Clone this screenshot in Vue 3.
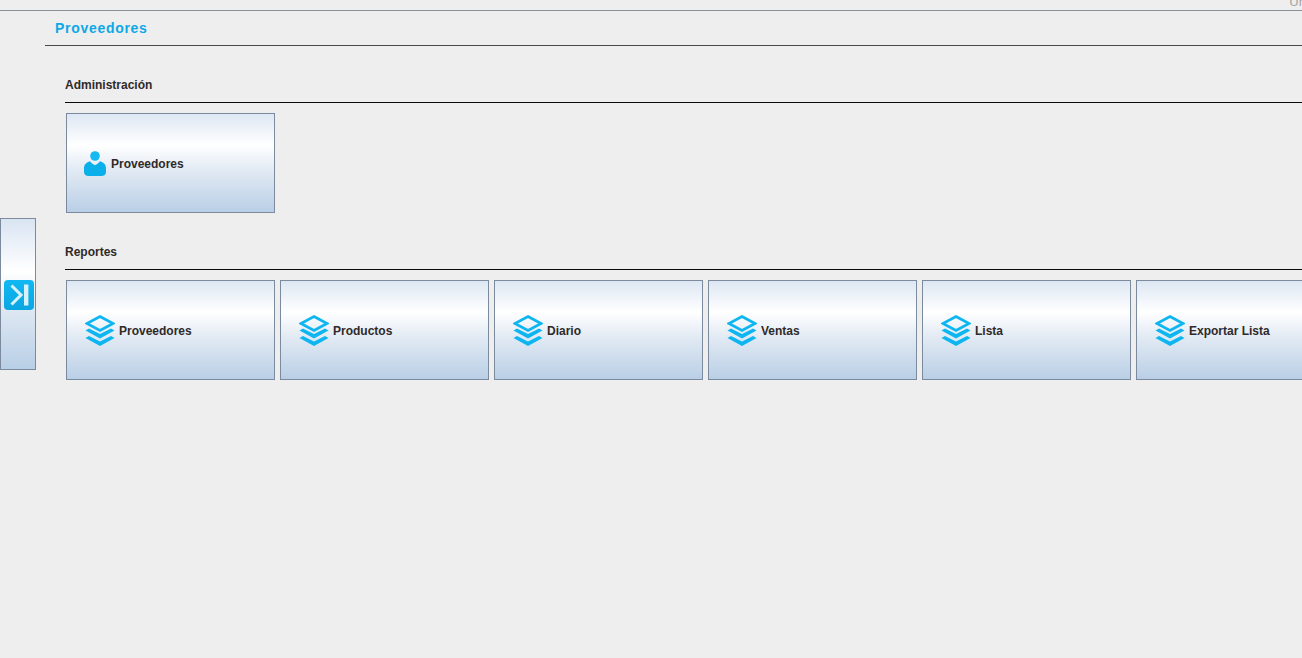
<script setup>
const reports = ['Proveedores', 'Productos', 'Diario', 'Ventas', 'Lista', 'Exportar Lista']
</script>

<template>
  <div class="page">
    <div class="topbar">
      <span class="user">Ur</span>
    </div>
    <div class="body">
      <aside class="side">
        <button class="toggle" type="button" aria-label="Expandir">
          <span class="toggle-icon">
            <svg width="30" height="30" viewBox="0 0 30 30">
              <path d="M7.5 5.5 L17 15 L7.5 24.5" fill="none" stroke="#d9f1fb" stroke-width="3" />
              <rect x="20" y="4.5" width="4.4" height="21" fill="#d9f1fb" />
            </svg>
          </span>
        </button>
      </aside>
      <main class="main">
        <h1 class="title">Proveedores</h1>
        <div class="content">
          <section class="section">
            <h2 class="heading">Administración</h2>
            <div class="tiles">
              <button class="tile tile-user" type="button">
                <svg class="icon" width="22" height="25" viewBox="0 0 22 25">
                  <circle cx="11" cy="5" r="4.8" fill="#12b9f2" />
                  <path d="M6 10.2 C7.5 12 9.2 13.6 11 14.2 C12.8 13.6 14.5 12 16 10.2 C19.5 11.2 22 13.5 22 17 L22 21 C22 23.5 20 25 17.5 25 L4.5 25 C2 25 0 23.5 0 21 L0 17 C0 13.5 2.5 11.2 6 10.2 Z" fill="#0bb0ea" />
                </svg>
                <span class="label">Proveedores</span>
              </button>
            </div>
          </section>
          <section class="section section-reports">
            <h2 class="heading">Reportes</h2>
            <div class="tiles">
              <button v-for="name in reports" :key="name" class="tile" type="button">
                <svg class="icon" width="30" height="31" viewBox="0 0 30 31">
                  <path d="M15 1.5 L28 8.5 L15 15.5 L2 8.5 Z" fill="none" stroke="#0db6f0" stroke-width="2.6" />
                  <path d="M0.5 15.5 L4 13.5 L15 19 L26 13.5 L29.5 15.5 L15 23.5 Z" fill="#0db6f0" />
                  <path d="M0.5 23 L4 21 L15 26.5 L26 21 L29.5 23 L15 31 Z" fill="#0db6f0" />
                </svg>
                <span class="label">{{ name }}</span>
              </button>
            </div>
          </section>
        </div>
      </main>
    </div>
  </div>
</template>

<style scoped>
.page {
  height: 658px;
  overflow: hidden;
  background: #eeeeee;
  font-family: "Liberation Sans", Arial, sans-serif;
  color: #2f2a2a;
}
.topbar {
  height: 10px;
  border-bottom: 1px solid #8a9199;
  display: flex;
  justify-content: flex-end;
  overflow: hidden;
}
.user {
  margin-top: -6px;
  margin-right: -1px;
  font-size: 13px;
  line-height: 15px;
  color: #a3a3a3;
  flex: none;
}
.body {
  display: flex;
}
.side {
  width: 45px;
  flex: none;
  padding-top: 207px;
  box-sizing: border-box;
}
.toggle {
  display: flex;
  align-items: flex-start;
  width: 36px;
  height: 152px;
  box-sizing: border-box;
  padding: 61px 0 0 3px;
  border: 1px solid #7b8a9d;
  background: linear-gradient(#d9e5f2 0%, #ffffff 35%, #e3ebf4 55%, #b9cfe6 100%);
}
.toggle-icon {
  display: block;
  width: 30px;
  height: 30px;
  border-radius: 4px;
  background: linear-gradient(#10b8f2, #0aa6e2);
}
.toggle-icon svg {
  display: block;
}
.main {
  flex: 1;
  min-width: 0;
}
.title {
  margin: 0;
  height: 35px;
  box-sizing: border-box;
  padding-left: 10px;
  border-bottom: 1px solid #47494b;
  font-size: 14px;
  line-height: 35px;
  font-weight: 700;
  letter-spacing: 0.7px;
  color: #0ea8e6;
}
.content {
  padding: 29px 0 0 20px;
}
.section-reports {
  margin-top: 29px;
}
.heading {
  margin: 0;
  height: 27px;
  border-bottom: 1px solid #0a0a0a;
  font-size: 12px;
  line-height: 20px;
  font-weight: 700;
}
.tiles {
  display: flex;
  gap: 5px;
  padding: 10px 0 0 1px;
}
.tile {
  display: flex;
  align-items: center;
  gap: 4px;
  flex: none;
  width: 209px;
  height: 100px;
  box-sizing: border-box;
  padding: 0 0 0 18px;
  border: 1px solid #7b8a9d;
  background: linear-gradient(#dde7f3 0%, #ffffff 32%, #e3ebf4 56%, #b9cfe6 100%);
  font-family: inherit;
  font-size: 12px;
  font-weight: 700;
  color: #2f2a2a;
  text-align: left;
}
.label {
  padding-top: 2px;
}
.tile-user {
  gap: 5px;
  padding-left: 17px;
}
.icon {
  flex: none;
}
</style>
